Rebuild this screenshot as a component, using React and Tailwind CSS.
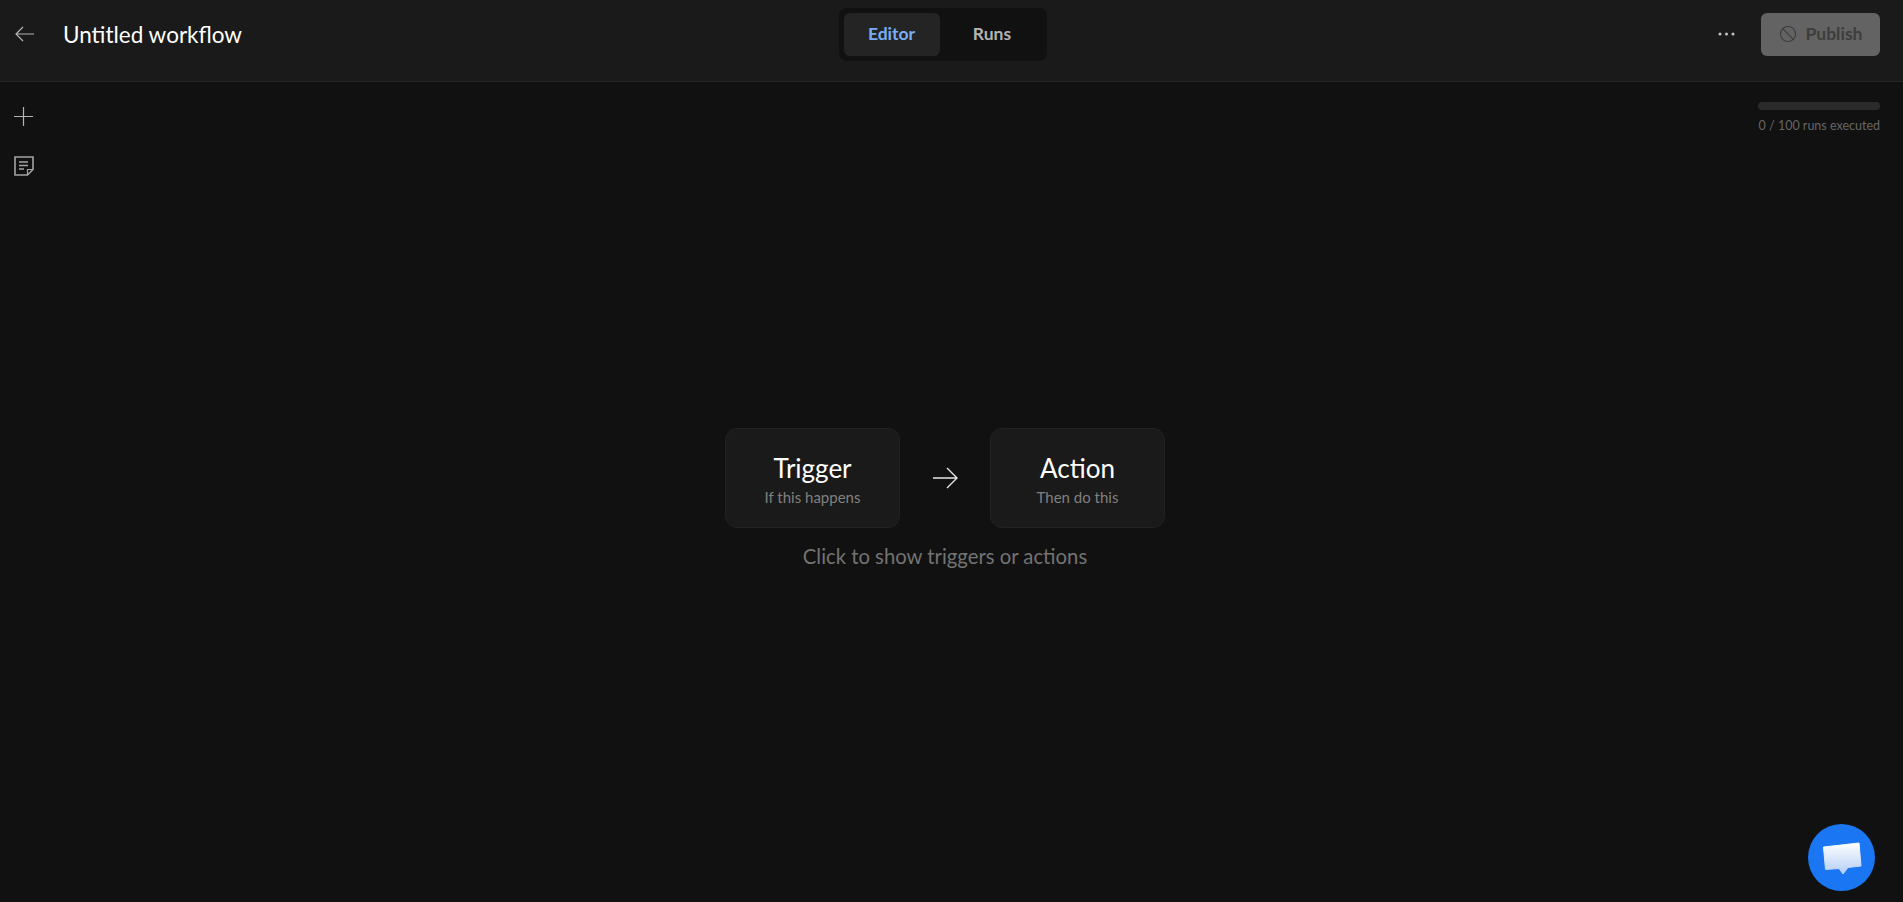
import { Ban } from 'lucide-react'

const font = { fontFamily: 'Lato, sans-serif' }

function StepCard({ title, hint }) {
  return (
    <div className="w-[175px] h-[100px] pt-[3px] flex flex-col items-center justify-center bg-[#1a1a1a] border border-[#222222] rounded-xl">
      <div className="text-[26px] leading-[32px] text-white">{title}</div>
      <div className="mt-[3px] text-[15px] leading-[20px] text-[#808080]">{hint}</div>
    </div>
  )
}

function NoteIcon() {
  return (
    <svg width="20" height="20" viewBox="0 0 20 20" fill="none" stroke="#a3a3a3" strokeWidth="1.6">
      <path d="M1 1h18v12.500l-5.500 5.500H1z" />
      <path d="M13.500 19v-5.500H19" strokeWidth="1.2" />
      <path d="M5 6h9M5 9.500h9M5 13h5" />
    </svg>
  )
}

function ChatBubble() {
  return (
    <svg width="40" height="34" viewBox="0 0 40 34">
      <defs>
        <linearGradient id="bubble" x1="0" y1="0" x2="0" y2="1">
          <stop offset="0" stopColor="#ffffff" />
          <stop offset="1" stopColor="#b4cdf5" />
        </linearGradient>
      </defs>
      <path d="M1.500 6 L37 2 L39 25 L26 26.500 L21 33 L17 27.500 L3.500 28.500 Z" fill="url(#bubble)" stroke="url(#bubble)" strokeLinejoin="round" strokeWidth="1" />
    </svg>
  )
}

export default function App() {
  return (
    <div className="h-[902px] flex flex-col overflow-hidden bg-[#111111] relative" style={font}>
      <header className="h-[82px] shrink-0 grid grid-cols-[1fr_auto_1fr] items-start bg-[#1a1a1a] border-b border-[#262626]">
        <div className="flex items-center h-[68px] pl-[15px]">
          <svg width="19" height="16" viewBox="0 0 19 16" fill="none" stroke="#b3b3b3" strokeWidth="1.2">
            <path d="M19 8H1M8 1 1 8l7 7" />
          </svg>
          <div className="ml-[29px] mt-[1px] text-[22.500px] leading-[28px] text-white">Untitled workflow</div>
        </div>
        <div className="mt-[8px] mr-[18px] flex p-[5px] bg-[#111111] rounded-lg">
          <div className="w-[96px] h-[43px] flex items-center justify-center rounded-md bg-[#242424] text-[#78aef5] text-[17.500px] font-bold">Editor</div>
          <div className="w-[102px] h-[43px] pl-[3px] flex items-center justify-center text-[#b3b3b3] text-[17.500px] font-bold">Runs</div>
        </div>
        <div className="flex items-center justify-end h-[68px] pr-[23px]">
          <svg width="17" height="4" viewBox="0 0 17 4" fill="#c4c4c4" className="mr-[26px]">
            <circle cx="2" cy="2" r="1.500" />
            <circle cx="8.500" cy="2" r="1.500" />
            <circle cx="15" cy="2" r="1.500" />
          </svg>
          <div className="w-[119px] h-[43px] flex items-center justify-center gap-[9px] rounded-md bg-[#636363] text-[#3d3d3d] text-[17.500px] font-bold">
            <Ban size={18} strokeWidth={1.5} />
            Publish
          </div>
        </div>
      </header>

      <div className="flex-1 flex relative">
        <aside className="w-[48px] flex flex-col items-center pt-[25px] pr-[1px] gap-[30px]">
          <svg width="19" height="19" viewBox="0 0 19 19" fill="none" stroke="#b3b3b3" strokeWidth="1.2">
            <path d="M0 9.500h19M9.500 0v19" />
          </svg>
          <NoteIcon />
        </aside>

        <main className="flex-1 flex flex-col items-center pt-[346px] pr-[61px]">
          <div className="flex items-center gap-[26px]">
            <StepCard title="Trigger" hint="If this happens" />
            <svg width="38" height="38" viewBox="0 0 38 38" fill="none" stroke="#e5e5e5" strokeWidth="1.4">
              <path d="M7 19h24M21 9l10 10-10 10" />
            </svg>
            <StepCard title="Action" hint="Then do this" />
          </div>
          <div className="mt-[14px] text-[20.300px] leading-[28px] text-[#737373]">Click to show triggers or actions</div>
        </main>

        <div className="absolute top-[20px] right-[23px] w-[122px]">
          <div className="h-[8px] rounded-full bg-[#2b2b2b]" />
          <div className="mt-[7px] text-[12.500px] leading-[18px] text-[#666666] whitespace-nowrap text-right">0 / 100 runs executed</div>
        </div>

        <button className="absolute right-[28px] bottom-[11px] w-[67px] h-[67px] rounded-full bg-[#1a76f2] flex items-center justify-center">
          <ChatBubble />
        </button>
      </div>
    </div>
  )
}
